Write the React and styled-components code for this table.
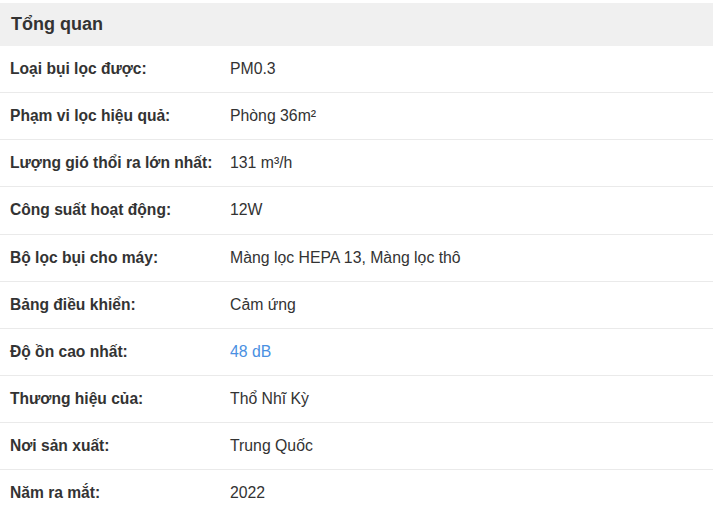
import React from "react";
import styled, { createGlobalStyle } from "styled-components";

const Global = createGlobalStyle`
  html, body { margin: 0; padding: 0; background: #fff; }
  body { font-family: "Liberation Sans", Arial, sans-serif; color: #333; }
`;

const Panel = styled.section`
  width: 713px;
  margin-top: 3px;
`;

const Header = styled.h2`
  margin: 0;
  height: 43px;
  display: flex;
  align-items: center;
  padding-left: 11px;
  background: #f0f0f0;
  font-size: 18px;
  font-weight: 700;
  color: #333;
`;

const List = styled.dl`
  margin: 0;
`;

const Row = styled.div`
  display: grid;
  grid-template-columns: 230px 1fr;
  align-items: center;
  height: 46.125px;
  border-bottom: 1px solid #eaeaea;
  &:last-child { border-bottom: none; }
`;

const Label = styled.dt`
  padding-left: 10px;
  font-size: 15.6px;
  font-weight: 700;
  color: #333;
`;

const Value = styled.dd`
  margin: 0;
  font-size: 15.8px;
  color: ${(p) => (p.$link ? "#4a90e2" : "#333")};
`;

const specs = [
  ["Loại bụi lọc được:", "PM0.3"],
  ["Phạm vi lọc hiệu quả:", "Phòng 36m²"],
  ["Lượng gió thổi ra lớn nhất:", "131 m³/h"],
  ["Công suất hoạt động:", "12W"],
  ["Bộ lọc bụi cho máy:", "Màng lọc HEPA 13, Màng lọc thô"],
  ["Bảng điều khiển:", "Cảm ứng"],
  ["Độ ồn cao nhất:", "48 dB", true],
  ["Thương hiệu của:", "Thổ Nhĩ Kỳ"],
  ["Nơi sản xuất:", "Trung Quốc"],
  ["Năm ra mắt:", "2022"],
];

export default function App() {
  return (
    <>
      <Global />
      <Panel>
        <Header>Tổng quan</Header>
        <List>
          {specs.map(([k, v, link]) => (
            <Row key={k}>
              <Label>{k}</Label>
              <Value $link={link}>{v}</Value>
            </Row>
          ))}
        </List>
      </Panel>
    </>
  );
}
